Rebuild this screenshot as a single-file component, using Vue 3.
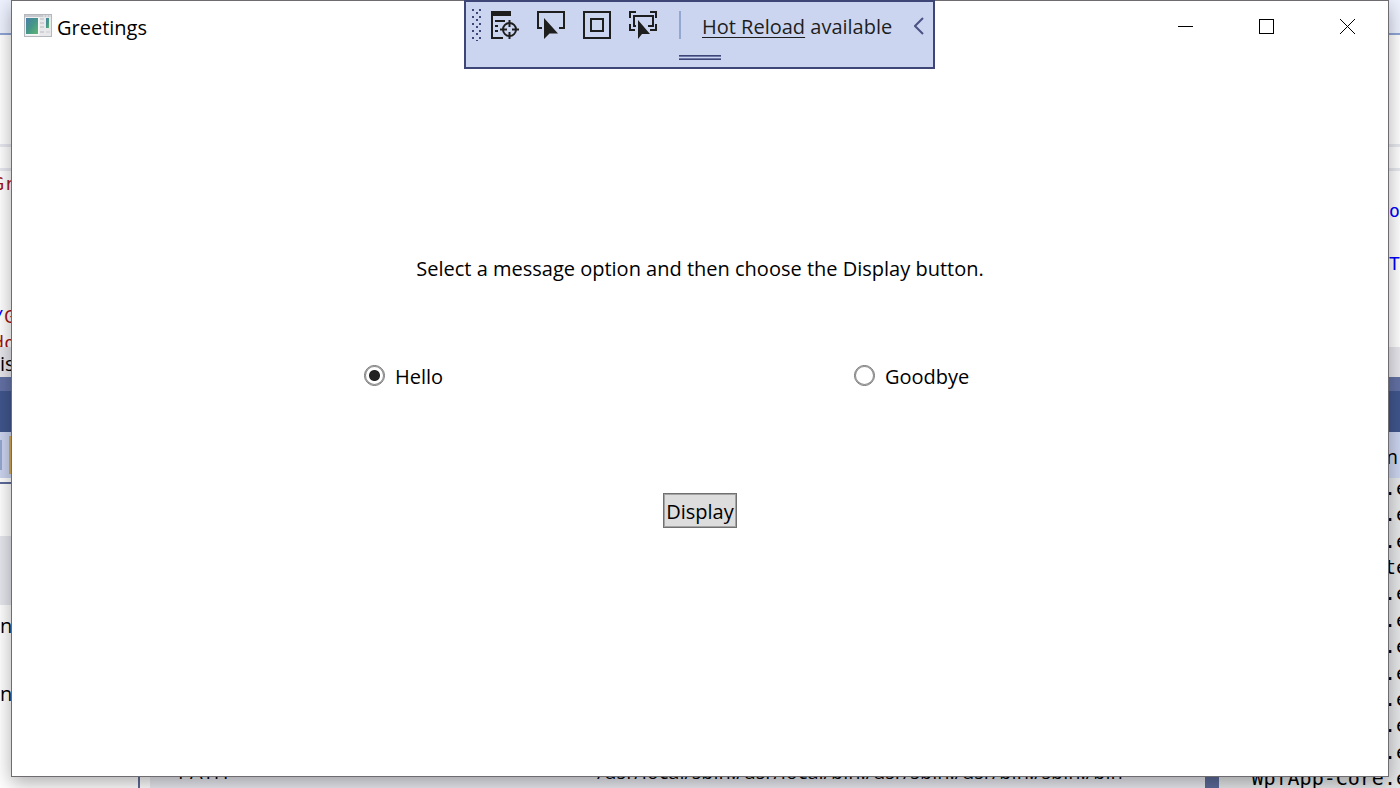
<script setup>
import { ref } from 'vue'

const choice = ref('hello')

const codeLines = [
  { left: 'Gr', leftTone: 'red', right: '' },
  { left: '', right: 'o' },
  { left: '', right: '' },
  { left: '', right: 'T' },
  { left: '', right: '' },
  { lead: '/', left: 'G', leftTone: 'red', right: '' },
  { left: 'do', leftTone: 'red', right: '' },
]

const outputLines = ['.e', '.e', '.e', 'te', '.e', '.e', '.e', '.e', '.e', '.e', '.e', 'WpfApp-Core.e']
</script>

<template>
  <div class="desktop">
    <div class="ide">
      <div class="ide-menu"></div>
      <div class="ide-tabs"></div>
      <div class="ide-crumbs"></div>
      <div class="ide-code">
        <div class="code-lines">
          <div v-for="(line, i) in codeLines" :key="i" class="code-line">
            <span class="code-left" :class="line.leftTone"><span class="blue">{{ line.lead }}</span>{{ line.left }}</span>
            <span class="code-right">{{ line.right }}</span>
          </div>
        </div>
      </div>
      <div class="ide-status">is</div>
      <div class="ide-splitter"></div>
      <div class="ide-heading"></div>
      <div class="ide-panels">
        <div class="panel-left">
          <div class="left-tools"><i class="tool-sep"></i><i class="tool-active"></i></div>
          <div class="left-rule"></div>
          <div class="left-selected"></div>
          <div class="left-item">n</div>
          <div class="left-item second">n</div>
        </div>
        <div class="panel-env">
          <span class="env-name">PATH</span>
          <span>/usr/local/sbin:/usr/local/bin:/usr/sbin:/usr/bin:/sbin:/bin</span>
        </div>
        <div class="panel-output">
          <div class="output-tools">m</div>
          <div class="output-lines">
            <div v-for="(line, i) in outputLines" :key="i" class="output-line">{{ line }}</div>
          </div>
        </div>
      </div>
    </div>

    <main class="window">
      <header class="titlebar">
        <svg class="app-icon" width="28" height="24" viewBox="0 0 28 24" aria-hidden="true">
          <defs>
            <linearGradient id="pane" x1="0" y1="0" x2="1" y2="1">
              <stop offset="0" stop-color="#4a7fa8" />
              <stop offset="0.5" stop-color="#459787" />
              <stop offset="1" stop-color="#63b575" />
            </linearGradient>
          </defs>
          <rect x="0.5" y="0.5" width="27" height="22" fill="#e9e9ec" stroke="#b4b7bc" />
          <rect x="1" y="1" width="26" height="2" fill="#c6c8cd" />
          <path d="M19 2h2M22 2h2M25 2h2" stroke="#eee" />
          <rect x="1.5" y="3.5" width="14" height="18" fill="#f8f8f8" />
          <rect x="2" y="4" width="12" height="16" fill="url(#pane)" />
          <path d="M16 5h4M16 9h4M16 13h4M16 18h4" stroke="#cfd1d5" stroke-width="2" />
          <rect x="22" y="4" width="3" height="10" fill="url(#pane)" />
          <path d="M22 18h4" stroke="#d8dade" stroke-width="2" />
        </svg>
        <h1>Greetings</h1>
        <div class="window-buttons">
          <button type="button" aria-label="Minimize">
            <svg width="15" height="15" viewBox="0 0 15 15"><path d="M0 7.5h15" stroke="#000" /></svg>
          </button>
          <button type="button" aria-label="Maximize">
            <svg width="15" height="15" viewBox="0 0 15 15"><rect x="0.5" y="0.5" width="14" height="14" fill="none" stroke="#000" /></svg>
          </button>
          <button type="button" aria-label="Close">
            <svg width="15" height="15" viewBox="0 0 15 15"><path d="M0 0l15 15M15 0L0 15" stroke="#000" /></svg>
          </button>
        </div>
      </header>

      <form class="content" @submit.prevent>
        <p class="message">Select a message option and then choose the Display button.</p>
        <div class="options">
          <label><input v-model="choice" type="radio" name="choice" value="hello" /><span>Hello</span></label>
          <label><input v-model="choice" type="radio" name="choice" value="goodbye" /><span>Goodbye</span></label>
        </div>
        <button class="display" type="submit">Display</button>
      </form>
    </main>

    <aside class="debug-bar">
      <div class="debug-row">
        <svg class="grip" width="10" height="32" viewBox="0 0 10 32" fill="#3d4676" aria-hidden="true">
          <g v-for="n in 5" :key="n">
            <rect x="0" :y="(n - 1) * 7" width="2" height="2" />
            <rect x="7" :y="(n - 1) * 7" width="2" height="2" />
            <rect x="4" :y="(n - 1) * 7 + 3" width="2" height="2" />
          </g>
        </svg>
        <button type="button" aria-label="Go to Live Visual Tree">
          <svg width="28" height="28" viewBox="0 0 28 28" fill="none" stroke="#1e1e1e" stroke-width="2">
            <path d="M0 0h20v5H0z" fill="#1e1e1e" stroke="none" />
            <path d="M1 4v23h11M4 10h10M4 15h3M4 20h3" />
            <circle cx="18.500" cy="18.500" r="6.500" />
            <path d="M18.500 9v7M18.500 21v7M9 18.500h7M21 18.500h7" />
          </svg>
        </button>
        <button type="button" aria-label="Select Element">
          <svg width="28" height="28" viewBox="0 0 28 28" fill="none" stroke="#1e1e1e" stroke-width="2">
            <path d="M5 17H1V1h26v16h-5" />
            <path d="M7 7v21l5.500-5.500H21z" fill="#1e1e1e" stroke="none" />
          </svg>
        </button>
        <button type="button" aria-label="Display Layout Adorners">
          <svg width="28" height="28" viewBox="0 0 28 28" fill="none" stroke="#1e1e1e" stroke-width="2">
            <path d="M1 1h26v26H1zM8 8h12v12H8z" />
          </svg>
        </button>
        <button type="button" aria-label="Track Focused Element">
          <svg width="28" height="28" viewBox="0 0 28 28" fill="none" stroke="#1e1e1e" stroke-width="2">
            <path d="M1 7V1h6M21 1h6v6M27 13v6h-6M1 13v6h5" />
            <path d="M7 15H5V5h19v10h-5" />
            <path d="M9 9v19l4-5h8z" fill="#1e1e1e" stroke="none" />
          </svg>
        </button>
        <i class="bar-sep"></i>
        <span class="reload"><a href="#">Hot Reload</a> available</span>
        <button class="collapse" type="button" aria-label="Collapse">
          <svg width="10" height="18" viewBox="0 0 10 18" fill="none" stroke="#4a5285" stroke-width="2"><path d="M9 1L1 9l8 8" /></svg>
        </button>
      </div>
      <div class="handle"></div>
    </aside>
  </div>
</template>

<style>
body {
  margin: 0;
}
</style>

<style scoped>
* {
  box-sizing: border-box;
}
.desktop {
  position: relative;
  display: flex;
  flex-direction: column;
  min-height: 100vh;
  overflow: hidden;
  font: 20px/28px "Open Sans", "Noto Sans", sans-serif;
  color: #000;
}
button {
  padding: 0;
  border: 0;
  background: none;
  font: inherit;
  color: inherit;
}
svg {
  display: block;
}

/* Editor behind the window */
.ide {
  position: absolute;
  inset: 0;
  display: flex;
  flex-direction: column;
  overflow: hidden;
  background: #fff;
}
.ide > * {
  flex: none;
}
.ide-menu {
  height: 35px;
  background: #eef2ff;
  border-bottom: 2px solid #8fa5d6;
}
.ide-tabs {
  height: 112px;
  border-bottom: 3px solid #e8e8f0;
}
.ide-crumbs {
  height: 24px;
  border-bottom: 3px solid #e8e8f0;
}
.ide-code {
  height: 176px;
  overflow: hidden;
  font: 18px/26px "DejaVu Sans Mono", monospace;
}
.code-lines {
  display: grid;
  grid-template-rows: repeat(7, 1fr);
  height: 186px;
}
.code-line {
  display: flex;
  justify-content: space-between;
}
.code-left {
  display: flex;
  justify-content: flex-end;
  width: 15px;
}
.code-right {
  width: 11px;
  color: #00f;
}
.red {
  color: #a31515;
}
.blue {
  color: #00f;
}
.ide-status {
  height: 30px;
  background: #e6e6ec;
  line-height: 34px;
}
.ide-splitter {
  height: 14px;
  background: #6371a5;
}
.ide-heading {
  height: 41px;
  background: #40568d;
}
.ide .ide-panels {
  flex: 1;
  display: flex;
  min-height: 0;
}
.panel-left {
  width: 140px;
  border-right: 2px solid #5d6b99;
}
.left-tools {
  display: flex;
  gap: 7px;
  height: 46px;
  padding: 4px 0;
  background: #ccd5f0;
}
.tool-sep {
  width: 2px;
  margin: 4px 0;
  background: #94a7d0;
}
.tool-active {
  width: 30px;
  background: #d9ac55;
}
.left-rule {
  height: 6px;
  border-bottom: 2px solid #5d6b99;
}
.left-selected {
  height: 69px;
  margin-top: 52px;
  background: #e6e7ee;
}
.left-item {
  margin-top: 7px;
}
.left-item.second {
  margin-top: 40px;
}
.panel-env {
  flex: 1;
  display: flex;
  align-items: flex-end;
  margin-left: 10px;
  padding: 0 0 2px 28px;
  background: #e9eaf0;
}
.env-name {
  width: 419px;
}
.panel-output {
  display: flex;
  flex-direction: column;
  width: 195px;
  border-left: 14px solid #5d6b99;
  background: #e6e7e8;
}
.output-tools {
  height: 46px;
  padding: 11px 2px 0 0;
  background: #ccd5f0;
  text-align: right;
}
.output-lines {
  display: flex;
  flex: 1;
  flex-direction: column;
  justify-content: space-between;
  margin: -2px -8px -2px 0;
  font: 20px/24px "DejaVu Sans Mono", monospace;
  text-align: right;
}

/* Application window */
.window {
  position: relative;
  flex: 1;
  margin: 0 11px 11px;
  border: 1px solid #6e6c70;
  background: #fff;
  box-shadow: 0 6px 18px rgba(0, 0, 0, 0.32);
}
.titlebar {
  display: flex;
  align-items: center;
  height: 50px;
  padding-left: 12px;
}
h1 {
  margin: 0 0 0 5px;
  padding-top: 4px;
  font-size: 20px;
  font-weight: 400;
}
.window-buttons {
  display: flex;
  margin-left: auto;
}
.window-buttons button {
  display: grid;
  place-items: center;
  width: 81px;
  height: 50px;
}
.content {
  display: flex;
  flex-direction: column;
  align-items: center;
  padding-top: 204px;
}
.message {
  margin: 0 0 78px;
}
.options {
  display: grid;
  grid-template-columns: 1fr 1fr;
  width: 100%;
  max-width: 980px;
  margin-bottom: 102px;
}
.options label {
  display: flex;
  align-items: center;
  gap: 10px;
  padding-left: 154px;
}
.options span {
  padding-top: 2px;
}
.options input {
  appearance: none;
  width: 21px;
  height: 21px;
  margin: 0 0 2px;
  border: 1px solid #707070;
  border-radius: 50%;
  background: #fff;
  box-shadow: inset 0 0 0 1px #8c8c8c;
}
.options input:checked {
  background: radial-gradient(circle, #212121 5px, #fff 6px);
}
.display {
  height: 35px;
  padding: 2px 2px 0;
  border: 1px solid #707070;
  background: #ddd;
  box-shadow: inset 0 0 0 1px #a4a4a4;
}

/* Debug toolbar docked over the title bar */
.debug-bar {
  position: absolute;
  top: 0;
  left: calc(50% - 236px);
  width: 471px;
  height: 69px;
  border: 2px solid #3d4676;
  background: #ccd5f0;
  color: #1e1e1e;
}
.debug-row {
  display: flex;
  align-items: center;
  height: 46px;
  padding-left: 6px;
}
.grip {
  margin-right: 9px;
}
.debug-row button {
  margin-right: 18px;
}
.bar-sep {
  width: 2px;
  height: 28px;
  margin: 0 21px 0 4px;
  background: #94a7d0;
}
.reload {
  padding-top: 4px;
  white-space: nowrap;
}
.reload a {
  color: inherit;
  text-decoration-thickness: 1px;
  text-underline-offset: 3px;
}
.debug-row .collapse {
  margin: 2px 9px 0 auto;
}
.handle {
  width: 42px;
  height: 5px;
  margin: 7px auto 0;
  border: solid #3d4676;
  border-width: 1px 0;
  box-shadow: inset 0 1px #6f78a8, inset 0 -1px #6f78a8;
}
</style>
